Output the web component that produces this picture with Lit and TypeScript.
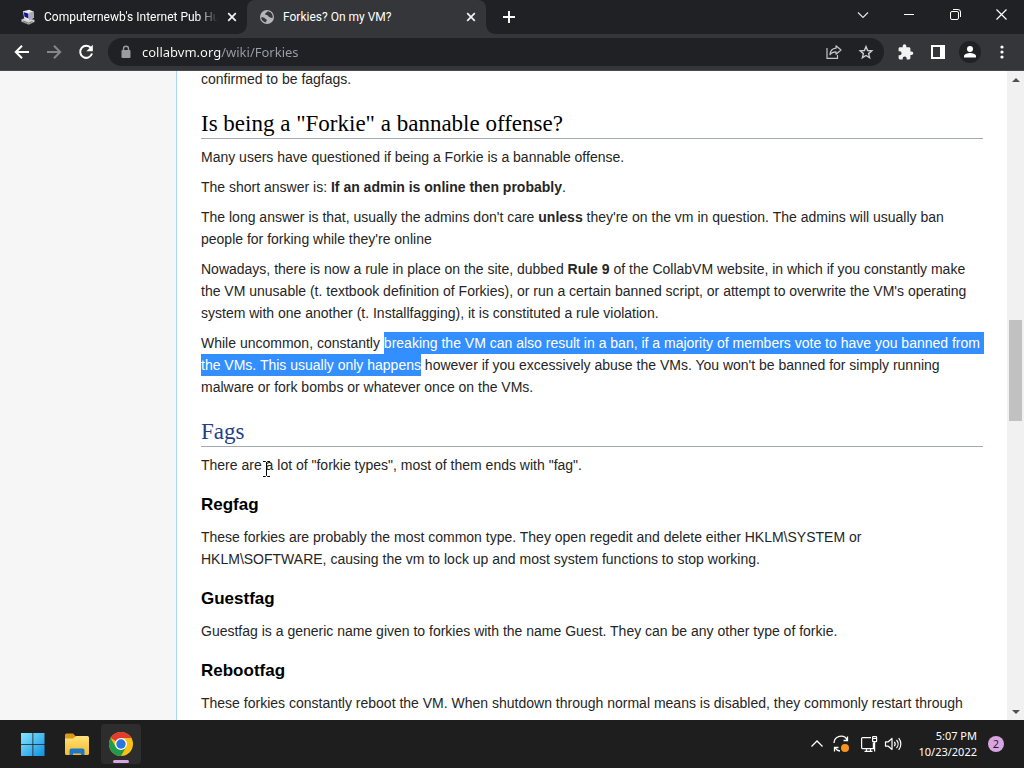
import { LitElement, html, css, svg } from "lit";
import { customElement } from "lit/decorators.js";

const icon = (size: number, body: unknown, box = size) =>
  html`<svg width=${size} height=${size} viewBox="0 0 ${box} ${box}" aria-hidden="true">${body}</svg>`;

const closeX = icon(10, svg`<path d="M1.2 1.2l7.6 7.6M8.8 1.2L1.2 8.8" stroke="#f1f3f4" stroke-width="1.7"/>`);

@customElement("browser-tabs")
class BrowserTabs extends LitElement {
  static styles = css`
    :host { display: flex; height: 34px; background: #202124; padding-left: 8px; color: #fff; }
    * { box-sizing: border-box; }
    button { border: 0; padding: 0; background: none; color: inherit; display: flex; align-items: center; justify-content: center; }
    .tab { position: relative; display: flex; align-items: center; gap: 8px; flex: 0 1 239px; min-width: 0; height: 34px; padding: 0 9px 0 12px; }
    .tab.active { background: #35363a; border-radius: 8px 8px 0 0; }
    .tab.active::before, .tab.active::after { content: ""; position: absolute; bottom: 0; width: 8px; height: 8px; }
    .tab.active::before { left: -8px; background: radial-gradient(circle at 0 0, #202124 7px, #35363a 8px); }
    .tab.active::after { right: -8px; background: radial-gradient(circle at 100% 0, #202124 7px, #35363a 8px); }
    .title { flex: 1; min-width: 0; overflow: hidden; white-space: nowrap; font: 12px/18px Roboto, sans-serif; }
    .fade { -webkit-mask-image: linear-gradient(90deg, #000 calc(100% - 20px), transparent); mask-image: linear-gradient(90deg, #000 calc(100% - 20px), transparent); }
    .close { width: 12px; height: 16px; }
    .fav { display: flex; width: 16px; }
    .new { width: 28px; margin-left: 9px; }
    .caption { display: flex; margin-left: auto; height: 29px; }
    .caption button { width: 46px; }
  `;

  render() {
    return html`
      <div class="tab">
        <span class="fav">${icon(16, svg`
          <path d="M1.5 10.5l5-2 8 2.5v1.8L8.7 15.5l-7.2-3z" fill="#d5d5d5" stroke="#777" stroke-width=".6"/>
          <path d="M3 12l5.5 2.1 4-1.7" fill="none" stroke="#555" stroke-width=".8"/>
          <path d="M3 2.2L9.2.8l4.3 1.8.4 6.2-5 2.6-4.7-2z" fill="#e9e9ee"/>
          <path d="M9.2 3.8l4.3-1.2.4 6.2-5 2.6z" fill="#a9abb5"/>
          <path d="M3.8 3.3l4.5 1.1.2 5-4-1.6z" fill="#14149a"/>`)}</span>
        <span class="title fade">Computernewb's Internet Pub Hub</span>
        <button class="close" aria-label="Close tab">${closeX}</button>
      </div>
      <div class="tab active">
        <span class="fav">${icon(16, svg`
          <circle cx="8" cy="8" r="7" fill="#b4b6ba"/>
          <path d="M2.2 8.3c1.6 0 3.3.2 3.8 1.1.4.8 1.7.5 1.8 1.4.1 1-.9 1.2-.7 2.7C4.2 13 2.3 11 2.2 8.3z" fill="#35363a"/>
          <path d="M8.6 2.3c-.2 1.4-1.9 1-2.3 2.2-.3 1 .4 1.5 1.5 1.6 1.3.1 1.2 1.6 2.5 1.9 1.2.2 1.2 1.2 3.4.8.4-3.3-1.8-6.1-5.1-6.5z" fill="#35363a"/>`)}</span>
        <span class="title">Forkies? On my VM?</span>
        <button class="close" aria-label="Close tab">${closeX}</button>
      </div>
      <button class="new" aria-label="New tab">${icon(12, svg`<path d="M6 0v12M0 6h12" stroke="#fff" stroke-width="1.9"/>`)}</button>
      <div class="caption">
        <button aria-label="Search tabs">${icon(12, svg`<path d="M1 3.5l5 5 5-5" fill="none" stroke="#e8e8e8" stroke-width="1.1"/>`)}</button>
        <button aria-label="Minimize">${icon(10, svg`<path d="M0 4.500h10" stroke="#fff"/>`)}</button>
        <button aria-label="Restore">${icon(11, svg`<rect x=".5" y="2.5" width="8" height="8" rx="1.5" fill="none" stroke="#fff"/><path d="M3 .5h5a2.5 2.5 0 0 1 2.5 2.5v5" fill="none" stroke="#fff"/>`)}</button>
        <button aria-label="Close window">${icon(11, svg`<path d="M.5.5l10 10M10.5.5l-10 10" stroke="#fff" stroke-width="1.2"/>`)}</button>
      </div>`;
  }
}

@customElement("browser-toolbar")
class BrowserToolbar extends LitElement {
  static styles = css`
    :host { display: flex; align-items: center; height: 37px; background: #35363a; padding: 0 6px; border-bottom: 1px solid #4a4a4d; box-sizing: border-box; }
    * { box-sizing: border-box; }
    button { border: 0; padding: 0; background: none; width: 32px; height: 28px; display: flex; align-items: center; justify-content: center; flex: none; }
    .box { flex: 1; min-width: 0; display: flex; align-items: center; height: 28px; margin: 0 6px; border-radius: 14px; background: #202124; padding: 0 2px 0 10px; }
    .lock { width: 16px; margin-right: 8px; }
    input { flex: 1; min-width: 0; border: 0; outline: 0; padding: 0; height: 22px; font: 13px/22px "Noto Sans", sans-serif;
      color: transparent; background: linear-gradient(90deg, #fff 79px, #9aa0a6 79px); -webkit-background-clip: text; background-clip: text; }
    .avatar { display: flex; width: 22px; height: 22px; border-radius: 50%; background: #202124; align-items: center; justify-content: center; }
  `;

  render() {
    return html`
      <button aria-label="Back">${icon(16, svg`<path d="M15 8H2M8 1.8L1.8 8 8 14.2" fill="none" stroke="#fff" stroke-width="2"/>`)}</button>
      <button aria-label="Forward">${icon(16, svg`<path d="M1 8h13M8 1.8L14.2 8 8 14.2" fill="none" stroke="#85868a" stroke-width="2"/>`)}</button>
      <button aria-label="Reload">${icon(16, svg`<path d="M13 4.2A6 6 0 1 0 14 9.5" fill="none" stroke="#fff" stroke-width="2"/><path d="M14.8.8v6.4H8.4z" fill="#fff"/>`)}</button>
      <div class="box">
        <button class="lock" aria-label="Site information">${icon(14, svg`<rect x="2.5" y="5" width="9" height="8" rx="1" fill="#9a9ca0"/><path d="M4.5 5.5V3.8a2.5 2.5 0 0 1 5 0v1.7" fill="none" stroke="#9a9ca0" stroke-width="1.4"/>`)}</button>
        <input type="text" aria-label="Address" value="collabvm.org/wiki/Forkies" />
        <button aria-label="Share">${icon(16, svg`<path d="M1 4v10.3h10.5V11" fill="none" stroke="#c4c7ca" stroke-width="1.2"/><path d="M10 1.8L15 6l-5 4.2V7.8c-3 0-4.6.8-6 3C4.2 7 6.5 4.5 10 4.2z" fill="none" stroke="#c4c7ca" stroke-width="1.2" stroke-linejoin="round"/>`)}</button>
        <button aria-label="Bookmark">${icon(16, svg`<path d="M8 2.6l1.600 3.900 4.200.4-3.200 2.700 1 4.100L8 11.500l-3.600 2.200 1-4.100-3.200-2.700 4.200-.4z" fill="none" stroke="#c9ccd0" stroke-width="1.4"/>`)}</button>
      </div>
      <button aria-label="Extensions">${icon(16, svg`<path d="M13.5 7.5h-1.1V4.6c0-.8-.6-1.4-1.4-1.4H8.300V2.100a1.800 1.800 0 0 0-3.600 0v1.100H2C1.200 3.200.6 3.800.6 4.600v2.700h1a2 2 0 0 1 0 4h-1V14c0 .8.6 1.400 1.400 1.400h2.700v-1a2 2 0 0 1 4 0v1H11c.8 0 1.400-.6 1.400-1.400v-2.900h1.100a1.800 1.800 0 0 0 0-3.600z" fill="#f1f3f4"/>`)}</button>
      <button aria-label="Side panel">${icon(14, svg`<rect x="1" y="1" width="12" height="12" fill="none" stroke="#fff" stroke-width="2"/><path d="M9 1h4v12H9z" fill="#fff"/>`)}</button>
      <button aria-label="Profile"><span class="avatar">${icon(12, svg`<circle cx="6" cy="3" r="3" fill="#fff"/><path d="M0 11.5V10c0-2 4-3 6-3s6 1 6 3v1.5z" fill="#fff"/>`)}</span></button>
      <button aria-label="Menu">${icon(16, svg`<g fill="#fff"><circle cx="8" cy="3" r="1.6"/><circle cx="8" cy="8" r="1.6"/><circle cx="8" cy="13" r="1.6"/></g>`)}</button>`;
  }
}

@customElement("wiki-page")
class WikiPage extends LitElement {
  static styles = css`
    :host { display: flex; background: #fff; overflow: hidden; min-height: 0; }
    * { box-sizing: border-box; }
    .side { width: 176px; flex: none; background: #f6f6f6; }
    main { flex: 1; min-width: 0; overflow: hidden; border-left: 1px solid #a7d7f9; padding: 0 24px; color: #252525; font: 14px/22px "Liberation Sans", Arial, sans-serif; }
    article { margin-top: -3px; display: flow-root; }
    p { margin: 0 0 8px; }
    h2 { margin: 20px 0 7px; padding-bottom: 1px; font: 400 23px/27px "Liberation Serif", Georgia, serif; color: #000; border-bottom: 1px solid #a2a9b1; }
    h2 a { color: #233f8b; text-decoration: none; }
    h3 { margin: 15px 0 8px; font-size: 17px; line-height: 27px; color: #000; }
    .sel { background: #338fff; color: #fff; padding: 3px 0; }
    .sel.eol { padding-right: 4px; margin-right: -4px; }
    .beam { position: absolute; margin: 7px 0 0 0; }
    .scroll { width: 17px; flex: none; background: #f1f1f1; display: flex; flex-direction: column; }
    .scroll button { border: 0; padding: 0; height: 17px; background: none; display: flex; align-items: center; justify-content: center; }
    .before { flex: 232; }
    .thumb { flex: 101; margin: 0 2px; background: #c1c1c1; }
    .after { flex: 282; }
  `;

  render() {
    return html`
      <aside class="side"></aside>
      <main><article>
        <p>confirmed to be fagfags.</p>
        <h2>Is being a "Forkie" a bannable offense?</h2>
        <p>Many users have questioned if being a Forkie is a bannable offense.</p>
        <p>The short answer is: <b>If an admin is online then probably</b>.</p>
        <p>The long answer is that, usually the admins don't care <b>unless</b> they're on the vm in question. The admins will usually ban people for forking while they're online</p>
        <p>Nowadays, there is now a rule in place on the site, dubbed <b>Rule 9</b> of the CollabVM website, in which if you constantly make the VM unusable (t. textbook definition of Forkies), or run a certain banned script, or attempt to overwrite the VM's operating system with one another (t. Installfagging), it is constituted a rule violation.</p>
        <p>While uncommon, constantly <span class="sel eol">breaking the VM can also result in a ban, if a majority of members vote to have you banned from</span> <span class="sel">the VMs. This usually only happens</span> however if you excessively abuse the VMs. You won't be banned for simply running malware or fork bombs or whatever once on the VMs.</p>
        <h2><a href="#fags">Fags</a></h2>
        <p>There are<svg class="beam" width="9" height="16" viewBox="0 0 9 16" aria-hidden="true"><path d="M1 .5h2.5l1 1 1-1H8M4.500 1.5v13M1 15.5h2.5l1-1 1 1H8" fill="none" stroke="#000"/></svg> a lot of "forkie types", most of them ends with "fag".</p>
        <h3>Regfag</h3>
        <p>These forkies are probably the most common type. They open regedit and delete either HKLM\\SYSTEM or HKLM\\SOFTWARE, causing the vm to lock up and most system functions to stop working.</p>
        <h3>Guestfag</h3>
        <p>Guestfag is a generic name given to forkies with the name Guest. They can be any other type of forkie.</p>
        <h3>Rebootfag</h3>
        <p>These forkies constantly reboot the VM. When shutdown through normal means is disabled, they commonly restart through</p>
      </article></main>
      <div class="scroll">
        <button aria-label="Scroll up">${icon(8, svg`<path d="M0 6l4-4 4 4z" fill="#505050"/>`)}</button>
        <div class="before"></div><div class="thumb"></div><div class="after"></div>
        <button aria-label="Scroll down">${icon(8, svg`<path d="M0 2l4 4 4-4z" fill="#505050"/>`)}</button>
      </div>`;
  }
}

@customElement("task-bar")
class TaskBar extends LitElement {
  static styles = css`
    :host { display: flex; align-items: center; height: 48px; background: #1e1e1e; color: #fff; padding: 0 20px 0 13px; box-sizing: border-box; }
    * { box-sizing: border-box; }
    button { border: 0; padding: 0; background: none; color: inherit; display: flex; align-items: center; justify-content: center; }
    .apps { display: flex; gap: 4px; }
    .apps button { position: relative; width: 40px; height: 40px; border-radius: 4px; }
    .apps .on { background: #2d2d2d; }
    .on::after { content: ""; position: absolute; bottom: 1px; left: 12px; width: 16px; height: 3px; border-radius: 2px; background: #d9a5e0; }
    .tray { display: flex; align-items: center; margin-left: auto; }
    .tray .i { width: 24px; height: 40px; }
    .tray .net { margin-left: 4px; }
    .clock { display: block; text-align: right; min-width: 61px; margin: 0 11px; font: 11px/16px "Noto Sans", sans-serif; }
    .badge { width: 16px; height: 16px; border-radius: 50%; background: #d9a5e0; color: #2a1a2c; font: 11px/16px "Noto Sans", sans-serif; }
  `;

  render() {
    return html`
      <div class="apps">
        <button aria-label="Start">${icon(24, svg`<defs><linearGradient id="w" x1="0" y1="0" x2="24" y2="24" gradientUnits="userSpaceOnUse"><stop stop-color="#8ae9ff"/><stop offset="1" stop-color="#0d8fe0"/></linearGradient></defs><path d="M0 1h11.500v11H0zM12.300 1H23.500v11H12.300zM0 12.800h11.500V24H0zM12.300 12.800h11.200V24H12.300z" fill="url(#w)"/>`)}</button>
        <button aria-label="File Explorer">${icon(26, svg`<defs><linearGradient id="f" x1="0" y1="0" x2="0" y2="1"><stop stop-color="#ffe27a"/><stop offset="1" stop-color="#f5bb2d"/></linearGradient></defs><path d="M1 4A1.500 1.500 0 0 1 2.500 2.500H9l2.500 2.500v4H1z" fill="#d99a1c"/><path d="M1 7.500h8L12 5h11.500A1.500 1.500 0 0 1 25 6.500v16a1.500 1.500 0 0 1-1.500 1.500h-21A1.500 1.500 0 0 1 1 22.500z" fill="url(#f)"/><path d="M5.500 24v-4.500a2 2 0 0 1 2-2h11a2 2 0 0 1 2 2V24H17v-1.500H9V24z" fill="#1b78c8"/>`)}</button>
        <button class="on" aria-label="Chrome">${icon(24, svg`
          <circle cx="12" cy="12" r="12" fill="#fbc116"/>
          <path d="M12 12L1.6 6A12 12 0 0 1 22.4 6H12z" fill="#e33b2e"/>
          <path d="M1.6 6A12 12 0 0 0 12 24l5.2-9L12 12 6.8 15z" fill="#229a49"/>
          <circle cx="12" cy="12" r="6" fill="#fff"/><circle cx="12" cy="12" r="4.7" fill="#2a76e0"/>`)}</button>
      </div>
      <div class="tray">
        <button class="i" aria-label="Show hidden icons">${icon(14, svg`<path d="M1.5 9.5L7 4l5.5 5.5" fill="none" stroke="#fff" stroke-width="1.3"/>`)}</button>
        <button class="i" aria-label="Updates">${icon(18, svg`<g fill="none" stroke="#fff" stroke-width="1.3"><path d="M2 8A7 7 0 0 1 15.2 5M15.5 1.5v4H11.5M2.5 16.5v-4h4M3 12.8A7 7 0 0 0 8 16"/></g><circle cx="13" cy="13" r="4" fill="#f7941d"/>`)}</button>
        <button class="i net" aria-label="Network">${icon(18, svg`<g fill="none" stroke="#fff" stroke-width="1.2"><path d="M11 2.6H2.6a1 1 0 0 0-1 1v9a1 1 0 0 0 1 1h10.800v-6M4.500 16.400h8M6.500 13.600v2.800M10.500 13.600v2.800"/><rect x="12.600" y="1.600" width="4" height="5" rx=".6"/><path d="M14.600 6.600v10M12.600 3.500h4"/></g>`)}</button>
        <button class="i" aria-label="Volume">${icon(18, svg`<g fill="none" stroke="#fff" stroke-width="1.2"><path d="M1.5 6.8h2.800L8 3.500v11l-3.700-3.300H1.500z" stroke-linejoin="round"/><path d="M10.300 6.800a3.500 3.500 0 0 1 0 4.400M12.500 5a6 6 0 0 1 0 8M14.700 3.200a9 9 0 0 1 0 11.600"/></g>`)}</button>
        <button class="clock">5:07 PM<br />10/23/2022</button>
        <button class="badge" aria-label="2 notifications">2</button>
      </div>`;
  }
}

@customElement("app-root")
class AppRoot extends LitElement {
  static styles = css`
    :host { display: grid; grid-template-rows: auto auto minmax(0, 1fr) auto; height: 100vh; overflow: hidden; }
  `;

  render() {
    return html`<browser-tabs></browser-tabs><browser-toolbar></browser-toolbar><wiki-page></wiki-page><task-bar></task-bar>`;
  }
}
